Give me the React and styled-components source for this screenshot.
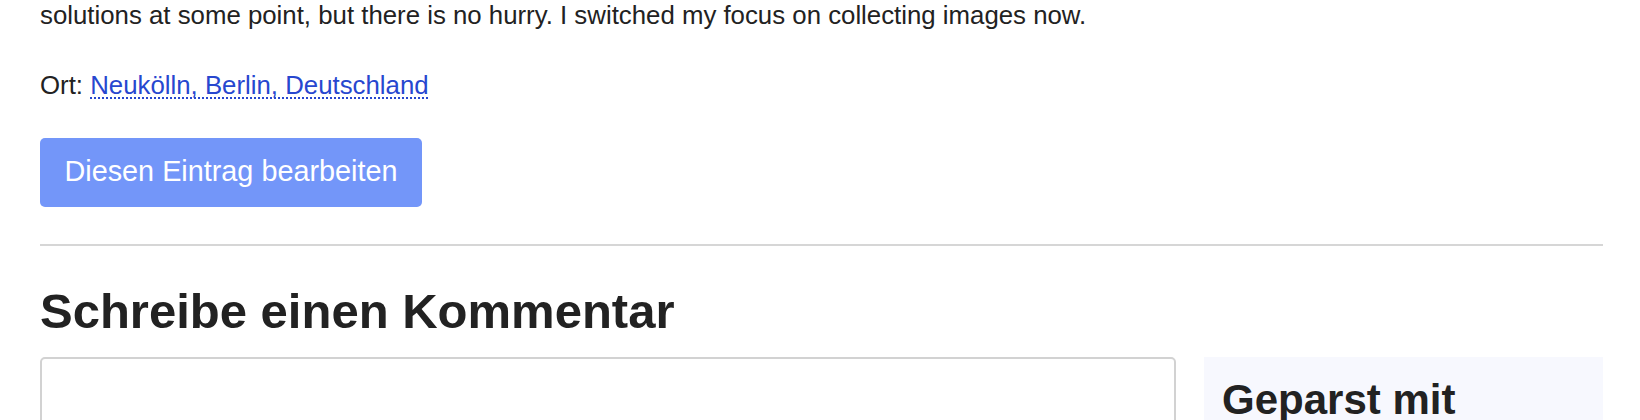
import React from "react";
import styled, { createGlobalStyle } from "styled-components";

const GlobalStyle = createGlobalStyle`
  html, body { margin: 0; padding: 0; background: #ffffff; }
  body {
    font-family: "Liberation Sans", Arial, Helvetica, sans-serif;
    color: #222222;
    overflow: hidden;
  }
  * { box-sizing: border-box; }
`;

const Page = styled.main`
  padding: 0 37px 0 40px;
  margin-top: -4px;
`;

const Paragraph = styled.p`
  margin: 0 0 31.6px;
  font-size: 25.8px;
  line-height: 38.4px;
  color: #222222;
`;

const PlaceLink = styled.a`
  color: #2747cf;
  text-decoration: underline dotted #2747cf;
  text-decoration-thickness: 2px;
  text-underline-offset: 3px;
`;

const EditButton = styled.button`
  display: inline-block;
  margin: 1.6px 0 0;
  padding: 12.9px 24.5px;
  border: none;
  border-radius: 5px;
  background: #7396f9;
  color: #ffffff;
  font-family: "Liberation Sans", Arial, Helvetica, sans-serif;
  font-size: 28.8px;
  line-height: 43.2px;
  cursor: pointer;
`;

const Divider = styled.hr`
  margin: 37px 0 0;
  border: none;
  border-top: 2px solid #d6d6d6;
`;

const SectionTitle = styled.h2`
  margin: 36px 0 16.4px;
  font-size: 49px;
  line-height: 58.8px;
  font-weight: 700;
  color: #222222;
`;

const CommentGrid = styled.section`
  display: grid;
  grid-template-columns: 1fr 399px;
  gap: 28px;
  align-items: start;
`;

const CommentBox = styled.textarea`
  display: block;
  width: 100%;
  height: 220px;
  border: 2px solid #d2d2d2;
  border-radius: 5px;
  resize: vertical;
  font-family: inherit;
  font-size: 25.6px;
  background: #ffffff;
`;

const Aside = styled.aside`
  background: #f7f8fe;
  padding: 18px 23px 24px 18px;
  min-height: 220px;
`;

const AsideTitle = styled.h3`
  margin: 0;
  font-size: 42px;
  line-height: 50px;
  font-weight: 700;
  color: #222222;
`;

export default function App() {
  return (
    <>
      <GlobalStyle />
      <Page>
        <Paragraph>
          solutions at some point, but there is no hurry. I switched my focus on collecting images now.
        </Paragraph>
        <Paragraph>
          Ort: <PlaceLink href="#">Neukölln, Berlin, Deutschland</PlaceLink>
        </Paragraph>
        <EditButton type="button">Diesen Eintrag bearbeiten</EditButton>
        <Divider />
        <SectionTitle>Schreibe einen Kommentar</SectionTitle>
        <CommentGrid>
          <CommentBox aria-label="Kommentar" />
          <Aside>
            <AsideTitle>Geparst mit</AsideTitle>
          </Aside>
        </CommentGrid>
      </Page>
    </>
  );
}
